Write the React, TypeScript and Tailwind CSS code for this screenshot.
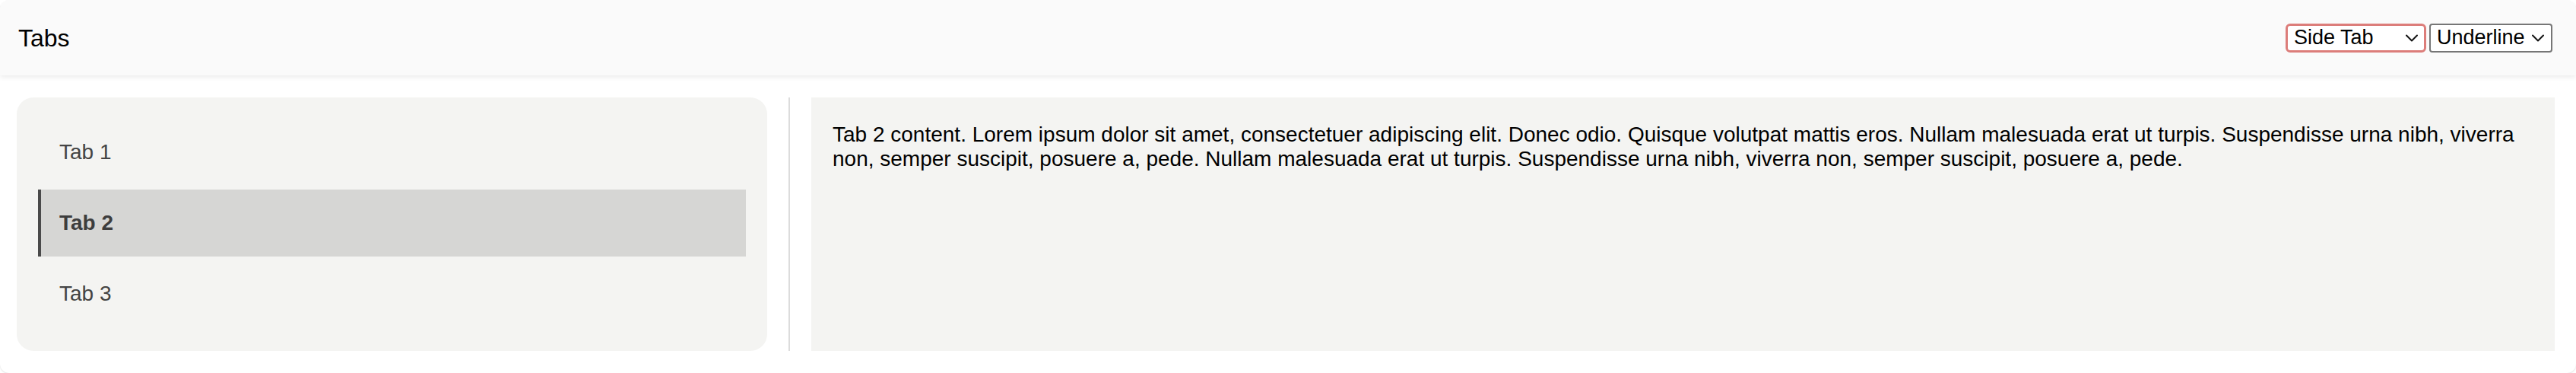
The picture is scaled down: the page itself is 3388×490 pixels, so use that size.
import { useState } from "react";

const tabs = [
  { id: 1, label: "Tab 1" },
  { id: 2, label: "Tab 2" },
  { id: 3, label: "Tab 3" },
];

const lorem =
  "Lorem ipsum dolor sit amet, consectetuer adipiscing elit. Donec odio. Quisque volutpat mattis eros. Nullam malesuada erat ut turpis. Suspendisse urna nibh, viverra non, semper suscipit, posuere a, pede. Nullam malesuada erat ut turpis. Suspendisse urna nibh, viverra non, semper suscipit, posuere a, pede.";

const Chevron = () => (
  <svg
    className="pointer-events-none absolute right-[10px] top-1/2 -translate-y-1/2"
    width="18"
    height="11"
    viewBox="0 0 18 11"
    fill="none"
  >
    <path d="M2 2l7 7 7-7" stroke="#111" strokeWidth="2" strokeLinecap="round" strokeLinejoin="round" />
  </svg>
);

export default function App() {
  const [active, setActive] = useState(2);
  const [layout, setLayout] = useState("side");
  const [variant, setVariant] = useState("underline");

  return (
    <div className="h-[490px] w-[3388px] bg-white font-['Liberation_Sans',Arial,sans-serif]">
      <div className="flex h-[490px] flex-col overflow-hidden rounded-[12px] bg-white shadow-[0_1px_2px_rgba(0,0,0,0.12)]">
        {/* header */}
        <div className="flex h-[99px] shrink-0 items-center justify-between bg-[#fafafa] pl-[24px] pr-[31px] shadow-[0_3px_6px_rgba(0,0,0,0.07)]">
          <h1 className="text-[32px] text-black">Tabs</h1>
          <div className="flex items-center gap-[4px]">
            <div className="relative">
              <select
                value={layout}
                onChange={(e) => setLayout(e.target.value)}
                className="h-[38px] w-[185px] appearance-none rounded-[6px] border-[3px] border-[#dc7d7a] bg-white pl-[8px] text-[27px] leading-none text-black outline-none"
              >
                <option value="side">Side Tab</option>
                <option value="top">Top Tab</option>
              </select>
              <Chevron />
            </div>
            <div className="relative">
              <select
                value={variant}
                onChange={(e) => setVariant(e.target.value)}
                className="h-[38px] w-[162px] appearance-none rounded-[4px] border-2 border-[#767676] bg-white pl-[8px] text-[27px] leading-none text-black outline-none"
              >
                <option value="underline">Underline</option>
                <option value="pill">Pill</option>
              </select>
              <Chevron />
            </div>
          </div>
        </div>

        {/* body */}
        <div className="mt-[29px] flex h-[333px] pl-[22px] pr-[28px]">
          <div className="flex w-[987px] shrink-0 flex-col gap-[5px] rounded-[22px] bg-[#f4f4f2] px-[28px] pt-[28px]">
            {tabs.map((t) => (
              <button
                key={t.id}
                onClick={() => setActive(t.id)}
                className={
                  t.id === active
                    ? "flex h-[88px] items-center border-l-4 border-[#4a4a4a] bg-[#d6d6d4] pl-[24px] text-left text-[28px] font-bold text-[#3d3d3d]"
                    : "flex h-[88px] items-center border-l-4 border-transparent pl-[24px] text-left text-[28px] text-[#444]"
                }
              >
                {t.label}
              </button>
            ))}
          </div>
          <div className="mx-[28px] w-[2px] shrink-0 bg-[#dcdcdc]" />
          <div className="flex-1 bg-[#f4f4f2] px-[28px] pt-[33px]">
            <p className="text-[28px] leading-[32px] text-black">
              Tab {active} content. {lorem}
            </p>
          </div>
        </div>
      </div>
    </div>
  );
}
